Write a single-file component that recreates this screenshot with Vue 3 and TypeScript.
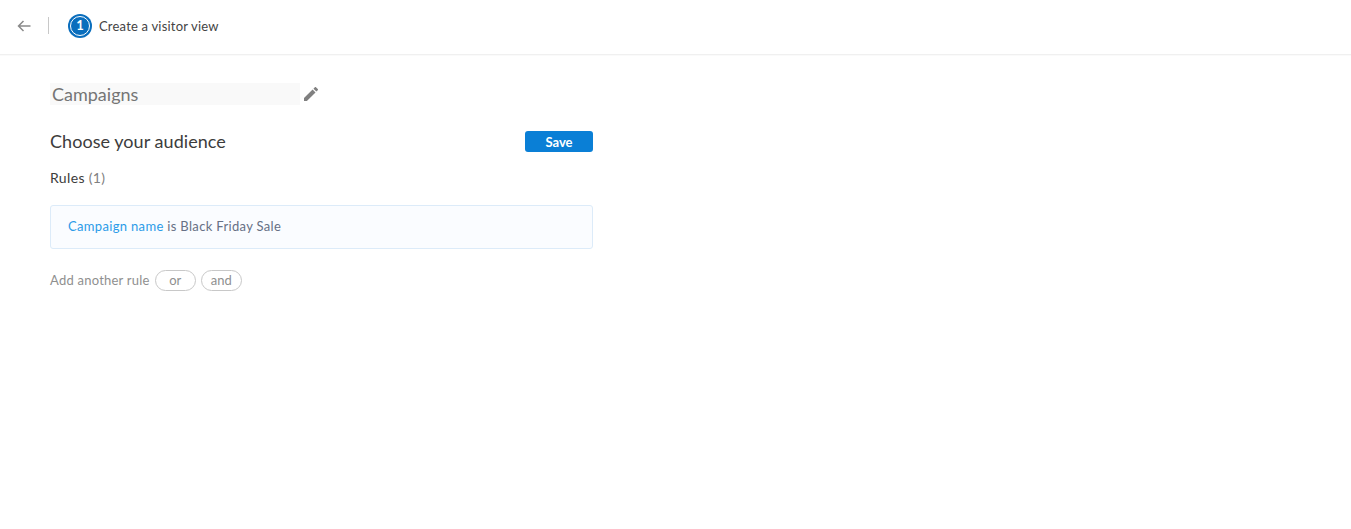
<script setup lang="ts">
const title: string = 'Create a visitor view'
</script>

<template>
  <div class="page">
    <header class="topbar">
      <svg class="back" width="14" height="12" viewBox="0 0 14 12" fill="none" stroke="#8a8a8a" stroke-width="1.5">
        <path d="M13.5 6H1.5M6.5 1 1.5 6l5 5" />
      </svg>
      <span class="divider"></span>
      <span class="step"><span class="step-inner">1</span></span>
      <span class="step-title">{{ title }}</span>
    </header>
    <main class="content">
      <div class="name-row">
        <div class="name-field">Campaigns</div>
        <svg class="pencil" width="14" height="14" viewBox="3 3 18 18" fill="#808080">
          <path d="M3 17.25V21h3.75L17.81 9.94l-3.75-3.75L3 17.25zM20.71 7.04a1 1 0 0 0 0-1.41l-2.34-2.34a1 1 0 0 0-1.41 0l-1.83 1.83 3.75 3.75 1.83-1.83z" />
        </svg>
      </div>
      <div class="panel">
        <div class="head-row">
          <h2 class="heading">Choose your audience</h2>
          <button class="save" type="button">Save</button>
        </div>
        <div class="rules-label">Rules <span class="count">(1)</span></div>
        <div class="rule-box"><span class="rule-key">Campaign name</span> is Black Friday Sale</div>
        <div class="add-row">
          <span class="add-label">Add another rule</span>
          <button class="pill pill-or" type="button">or</button>
          <button class="pill pill-and" type="button">and</button>
        </div>
      </div>
    </main>
  </div>
</template>

<style scoped>
.page {
  width: 1351px;
  height: 529px;
  overflow: hidden;
  background: #fff;
  font-family: Lato, "Open Sans", sans-serif;
}
.topbar {
  height: 55px;
  box-sizing: border-box;
  display: flex;
  align-items: center;
  padding: 0 0 3px 17px;
  border-bottom: 1px solid #f0f0f0;
  box-shadow: 0 1px 1px rgba(0, 0, 0, 0.02);
}
.back { flex: none; }
.divider {
  width: 1px;
  height: 17px;
  background: #c8c8c8;
  margin-left: 17px;
  margin-right: 19px;
}
.step {
  width: 24px;
  height: 24px;
  box-sizing: border-box;
  border-radius: 50%;
  background: #0a6ebd;
  padding: 2px;
  display: flex;
}
.step-inner {
  flex: 1;
  border: 1px solid #fff;
  border-radius: 50%;
  color: #fff;
  font-size: 13px;
  font-weight: 700;
  line-height: 17px;
  text-align: center;
}
.step-title {
  margin-left: 7px;
  font-size: 13px;
  letter-spacing: 0.2px;
  color: #444;
}
.content { padding: 28px 0 0 50px; }
.name-row {
  display: flex;
  align-items: center;
}
.name-field {
  width: 250px;
  height: 22px;
  box-sizing: border-box;
  padding-left: 2px;
  background: #f9f9f9;
  color: #757575;
  font-size: 18px;
  line-height: 22px;
}
.pencil { margin-left: 4px; }
.panel { width: 543px; }
.head-row {
  display: flex;
  align-items: center;
  justify-content: space-between;
  margin-top: 26px;
  height: 21px;
}
.heading {
  margin: -2px 0 0;
  font-size: 18px;
  font-weight: 400;
  letter-spacing: 0.05px;
  color: #3c3c3c;
}
.save {
  width: 68px;
  height: 21px;
  border: 0;
  border-radius: 3px;
  background: #0a7fd6;
  color: #fff;
  font-family: inherit;
  font-size: 13px;
  font-weight: 700;
  padding: 0;
}
.rules-label {
  margin-top: 17px;
  font-size: 14px;
  letter-spacing: 0.35px;
  line-height: 18px;
  color: #3c3c3c;
}
.count { color: #808080; }
.rule-box {
  margin-top: 18px;
  height: 44px;
  box-sizing: border-box;
  padding-left: 17px;
  border: 1px solid #dcebf9;
  border-radius: 3px;
  background: #fafcff;
  font-size: 13px;
  letter-spacing: 0.33px;
  line-height: 41px;
  color: #667085;
}
.rule-key { color: #2a9be8; }
.add-row {
  display: flex;
  align-items: center;
  margin-top: 21px;
  height: 21px;
}
.add-label {
  margin-top: -2px;
  font-size: 13px;
  letter-spacing: 0.23px;
  color: #8f8f8f;
}
.pill {
  height: 21px;
  box-sizing: border-box;
  border: 1px solid #c8c8c8;
  border-radius: 11px;
  background: #fff;
  color: #8f8f8f;
  font-family: inherit;
  font-size: 13px;
  line-height: 17px;
  padding: 0 0 1px;
}
.pill-or { width: 41px; margin-left: 5px; }
.pill-and { width: 41px; margin-left: 5px; }
</style>
